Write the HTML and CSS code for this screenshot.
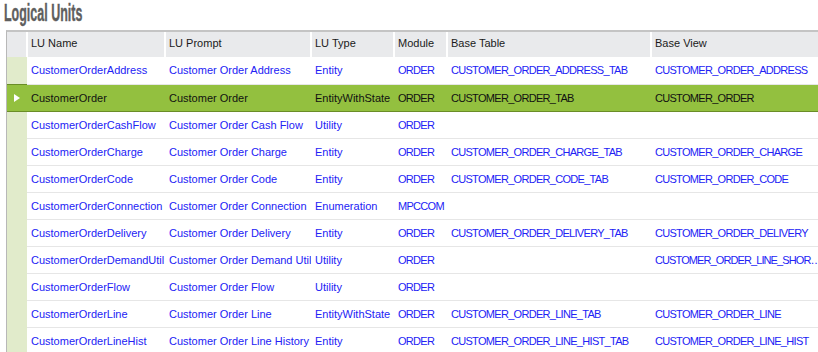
FILE: index.html
```html
<html>
<head>
  <link rel="stylesheet" href="styles.css">
</head>
<body>
  <h1 class="title"><span>Logical Units</span></h1>
  <div class="grid">
    <table>
      <colgroup>
        <col class="c-gut">
        <col class="c-name">
        <col class="c-prompt">
        <col class="c-type">
        <col class="c-module">
        <col class="c-table">
        <col class="c-view">
      </colgroup>
      <thead>
        <tr>
          <th class="gut"></th>
          <th>LU Name</th>
          <th>LU Prompt</th>
          <th>LU Type</th>
          <th>Module</th>
          <th>Base Table</th>
          <th>Base View</th>
        </tr>
      </thead>
      <tbody>
        <tr>
          <td class="gut"></td>
          <td>CustomerOrderAddress</td>
          <td>Customer Order Address</td>
          <td>Entity</td>
          <td class="up">ORDER</td>
          <td class="up">CUSTOMER_ORDER_ADDRESS_TAB</td>
          <td class="up">CUSTOMER_ORDER_ADDRESS</td>
        </tr>
        <tr class="selected">
          <td class="gut"><span class="arrow"></span></td>
          <td>CustomerOrder</td>
          <td>Customer Order</td>
          <td>EntityWithState</td>
          <td class="up">ORDER</td>
          <td class="up">CUSTOMER_ORDER_TAB</td>
          <td class="up">CUSTOMER_ORDER</td>
        </tr>
        <tr>
          <td class="gut"></td>
          <td>CustomerOrderCashFlow</td>
          <td>Customer Order Cash Flow</td>
          <td>Utility</td>
          <td class="up">ORDER</td>
          <td></td>
          <td></td>
        </tr>
        <tr>
          <td class="gut"></td>
          <td>CustomerOrderCharge</td>
          <td>Customer Order Charge</td>
          <td>Entity</td>
          <td class="up">ORDER</td>
          <td class="up">CUSTOMER_ORDER_CHARGE_TAB</td>
          <td class="up">CUSTOMER_ORDER_CHARGE</td>
        </tr>
        <tr>
          <td class="gut"></td>
          <td>CustomerOrderCode</td>
          <td>Customer Order Code</td>
          <td>Entity</td>
          <td class="up">ORDER</td>
          <td class="up">CUSTOMER_ORDER_CODE_TAB</td>
          <td class="up">CUSTOMER_ORDER_CODE</td>
        </tr>
        <tr>
          <td class="gut"></td>
          <td>CustomerOrderConnection</td>
          <td>Customer Order Connection</td>
          <td>Enumeration</td>
          <td class="up">MPCCOM</td>
          <td></td>
          <td></td>
        </tr>
        <tr>
          <td class="gut"></td>
          <td>CustomerOrderDelivery</td>
          <td>Customer Order Delivery</td>
          <td>Entity</td>
          <td class="up">ORDER</td>
          <td class="up">CUSTOMER_ORDER_DELIVERY_TAB</td>
          <td class="up">CUSTOMER_ORDER_DELIVERY</td>
        </tr>
        <tr>
          <td class="gut"></td>
          <td>CustomerOrderDemandUtil</td>
          <td>Customer Order Demand Util</td>
          <td>Utility</td>
          <td class="up">ORDER</td>
          <td></td>
          <td class="up tight">CUSTOMER_ORDER_LINE_SHOR…</td>
        </tr>
        <tr>
          <td class="gut"></td>
          <td>CustomerOrderFlow</td>
          <td>Customer Order Flow</td>
          <td>Utility</td>
          <td class="up">ORDER</td>
          <td></td>
          <td></td>
        </tr>
        <tr>
          <td class="gut"></td>
          <td>CustomerOrderLine</td>
          <td>Customer Order Line</td>
          <td>EntityWithState</td>
          <td class="up">ORDER</td>
          <td class="up">CUSTOMER_ORDER_LINE_TAB</td>
          <td class="up">CUSTOMER_ORDER_LINE</td>
        </tr>
        <tr>
          <td class="gut"></td>
          <td>CustomerOrderLineHist</td>
          <td>Customer Order Line History</td>
          <td>Entity</td>
          <td class="up">ORDER</td>
          <td class="up">CUSTOMER_ORDER_LINE_HIST_TAB</td>
          <td class="up">CUSTOMER_ORDER_LINE_HIST</td>
        </tr>
      </tbody>
    </table>
  </div>
</body>
</html>
```

FILE: styles.css
```css
/* page */
body {
  margin: 0;
  overflow: hidden;
  background: #fff;
  font-family: "Liberation Sans", Arial, sans-serif;
}

/* title */
.title {
  margin: 0;
  padding: 0 0 0 4px;
  height: 30px;
  font-family: "Liberation Sans", Arial, sans-serif;
  font-weight: bold;
  font-size: 24px;
  line-height: 26px;
  color: #5e5e5e;
  box-sizing: border-box;
}

.title span {
  display: inline-block;
  transform: scaleX(0.52);
  transform-origin: 0 50%;
  -webkit-text-stroke: 0.4px #5e5e5e;
}

/* grid */
.grid {
  margin-left: 6px;
  border-left: 1px solid #b8b8b8;
  border-top: 2px solid #c4c4c4;
}

table {
  border-collapse: collapse;
  table-layout: fixed;
  width: 811px;
  font-size: 11px;
}

.c-gut { width: 20px; }
.c-name { width: 138px; }
.c-prompt { width: 146px; }
.c-type { width: 83px; }
.c-module { width: 53px; }
.c-table { width: 204px; }
.c-view { width: 167px; }

th {
  height: 25px;
  padding: 0 0 3px 3px;
  text-align: left;
  font-weight: normal;
  color: #1a1a1a;
  background: #e9eaec;
  border-left: 2px solid #fff;
}

th.gut {
  border-left: none;
}

td {
  height: 27px;
  padding: 0 0 0 4px;
  color: #2222f5;
  white-space: nowrap;
  overflow: hidden;
  border-bottom: 1px solid #e6e6e6;
}

td.up {
  letter-spacing: -0.7px;
}

td.tight {
  letter-spacing: -0.9px;
}

td.gut {
  padding: 0;
  background: #e1ebcb;
  border-bottom: none;
}

/* selected row */
tr.selected td {
  background: #93c03f;
  color: #111;
  border-top: 1px solid #6a8d27;
  border-bottom: 1px solid #6a8d27;
}

.arrow {
  display: block;
  width: 0;
  height: 0;
  margin-left: 7px;
  border-top: 4px solid transparent;
  border-bottom: 4px solid transparent;
  border-left: 6px solid #fff;
}
```
